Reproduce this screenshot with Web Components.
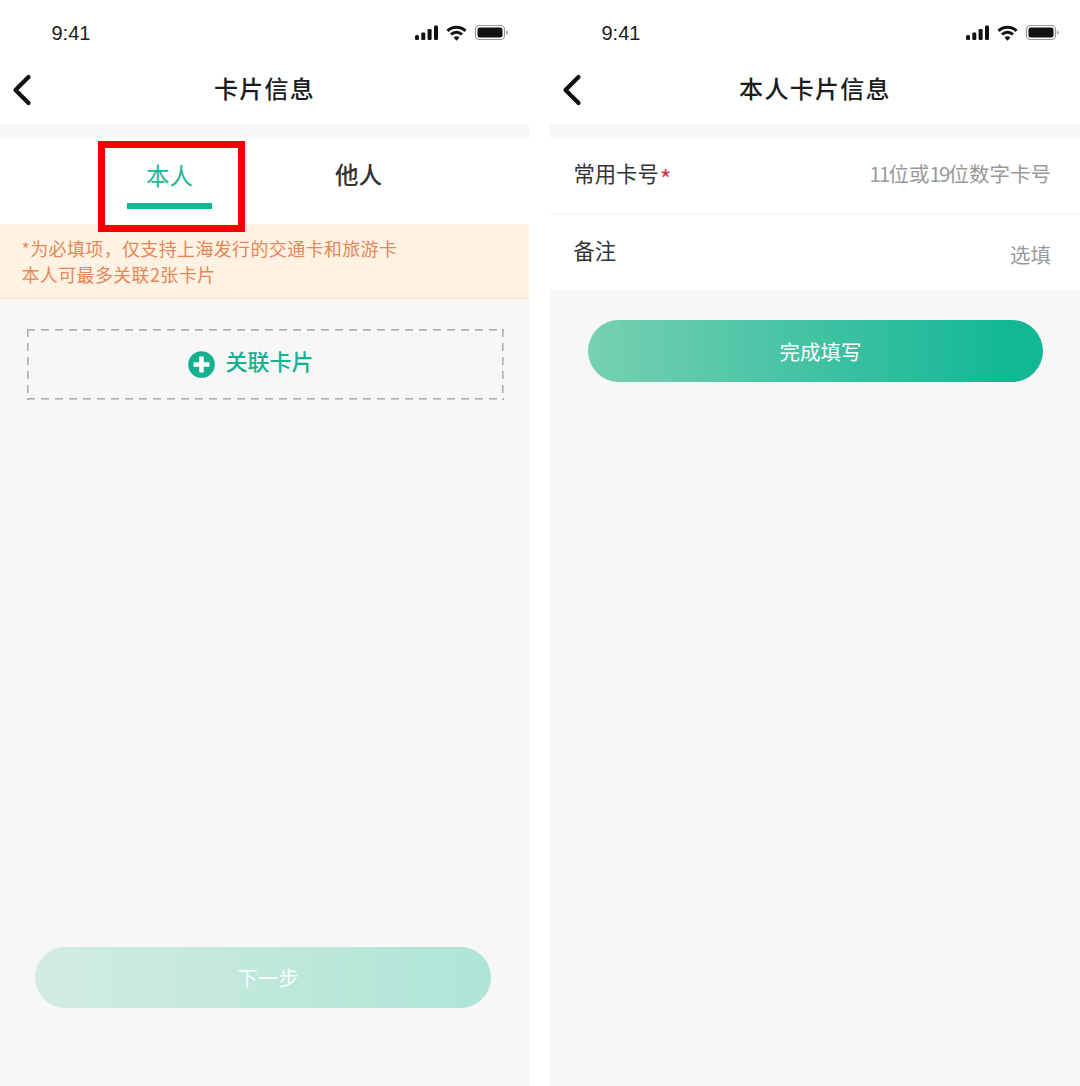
<!DOCTYPE html>
<html lang="zh">
<head>
<meta charset="utf-8">
<title>卡片信息</title>
<style>
  html, body { margin: 0; background: #fff; }
  body {
    width: 1080px;
    height: 1086px;
    overflow: hidden;
    display: flex;
    gap: 21px;
    font-family: "Noto Sans CJK SC", "Liberation Sans", sans-serif;
  }
</style>
</head>
<body>
  <phone-screen title="卡片信息" style="width:529px">
    <tab-switch>
      <tab-item active>本人</tab-item>
      <tab-item>他人</tab-item>
    </tab-switch>
    <notice-banner>*为必填项，仅支持上海发行的交通卡和旅游卡<br>本人可最多关联2张卡片</notice-banner>
    <add-card>关联卡片</add-card>
    <gradient-button disabled style="margin:auto 38px 78px 35px;height:61px;padding-bottom:2px">下一步</gradient-button>
  </phone-screen>

  <phone-screen title="本人卡片信息" style="width:530px">
    <form-row label="常用卡号" required value="11位或19位数字卡号"></form-row>
    <form-row label="备注" value="选填" last></form-row>
    <gradient-button style="margin:30px 37px 0 38px">完成填写</gradient-button>
  </phone-screen>

<script>
class StatusBar extends HTMLElement {
  constructor() {
    super();
    this.attachShadow({ mode: 'open' });
    this.shadowRoot.innerHTML = `
      <style>
        :host { display: flex; align-items: center; justify-content: space-between; height: 46px; padding: 10px 20px 0 51.500px; background: #fff; }
        .time { font: 20px/24px "Liberation Sans", Arial, sans-serif; color: #1a1a1a; }
        svg { display: block; }
      </style>
      <span class="time">9:41</span>
      <svg width="94" height="18" viewBox="0 0 94 18">
        <g fill="#111">
          <rect x="0" y="11" width="4" height="5" rx="1.5"/>
          <rect x="6.300" y="8.500" width="4" height="7.500" rx="1.200"/>
          <rect x="12.600" y="5" width="4" height="11" rx="1.200"/>
          <rect x="19" y="1.500" width="4" height="14.500" rx="1.200"/>
        </g>
        <g fill="none" stroke="#111" stroke-width="3">
          <path d="M32.500 6.800a13 13 0 0 1 18 0"/>
          <path d="M36 10.500a8 8 0 0 1 11 0"/>
        </g>
        <path d="M38.600 13.400a4.400 4.400 0 0 1 5.800 0L41.500 16.800z" fill="#111"/>
        <rect x="60.500" y="1.500" width="29" height="14" rx="4" fill="none" stroke="#999" stroke-width="1.200"/>
        <rect x="62.500" y="3.500" width="25" height="10" rx="2.200" fill="#111"/>
        <path d="M91 6.500c1.400.4 2 1.200 2 2s-.6 1.600-2 2z" fill="#aaa"/>
      </svg>`;
  }
}
customElements.define('status-bar', StatusBar);

class NavBar extends HTMLElement {
  constructor() {
    super();
    this.attachShadow({ mode: 'open' });
    this.shadowRoot.innerHTML = `
      <style>
        :host { display: grid; grid-template-columns: 1fr auto 1fr; align-items: center; height: 68px; background: #fff; }
        svg { display: block; margin: -1px 0 0 11px; }
        .title { font-size: 24px; line-height: 34px; letter-spacing: 1.300px; color: #1c1c1c; font-weight: 500; padding-bottom: 4px; }
      </style>
      <svg width="22" height="34" viewBox="0 0 22 34"><path d="M17.500 4 4.500 17 17.500 30" fill="none" stroke="#111" stroke-width="4.200" stroke-linecap="round" stroke-linejoin="round"/></svg>
      <div class="title"><slot></slot></div>
      <div></div>`;
  }
}
customElements.define('nav-bar', NavBar);

class PhoneScreen extends HTMLElement {
  constructor() {
    super();
    this.attachShadow({ mode: 'open' });
    this.shadowRoot.innerHTML = `
      <style>
        :host { display: flex; flex-direction: column; height: 1086px; background: #f7f7f7; flex: none; }
        .gap { height: 14px; flex: none; }
      </style>
      <status-bar></status-bar>
      <nav-bar></nav-bar>
      <div class="gap"></div>
      <slot></slot>`;
    this.shadowRoot.querySelector('nav-bar').textContent = this.getAttribute('title');
  }
}
customElements.define('phone-screen', PhoneScreen);

class TabSwitch extends HTMLElement {
  constructor() {
    super();
    this.attachShadow({ mode: 'open' });
    this.shadowRoot.innerHTML = `
      <style>
        :host { display: flex; justify-content: center; gap: 104px; height: 86px; padding-right: 1px; background: #fff; position: relative; }
        .mark { position: absolute; left: 98px; top: 3px; width: 147px; height: 91px; box-sizing: border-box; border: 7px solid #f60006; pointer-events: none; }
      </style>
      <slot></slot>
      <div class="mark"></div>`;
  }
}
customElements.define('tab-switch', TabSwitch);

class TabItem extends HTMLElement {
  constructor() {
    super();
    this.attachShadow({ mode: 'open' });
    this.shadowRoot.innerHTML = `
      <style>
        :host { display: block; width: 85px; height: 71px; padding-top: 18px; box-sizing: border-box; text-align: center; font-size: 23.500px; line-height: 36px; font-weight: 500; color: #333; }
        :host([active]) { color: #1fb596; font-weight: 400; padding-top: 19px; border-bottom: 6px solid #14b795; }
      </style>
      <slot></slot>`;
  }
}
customElements.define('tab-item', TabItem);

class NoticeBanner extends HTMLElement {
  constructor() {
    super();
    this.attachShadow({ mode: 'open' });
    this.shadowRoot.innerHTML = `
      <style>
        :host { display: block; height: 75px; box-sizing: border-box; padding: 12px 21.500px 0; background: #fff2e2; border-bottom: 2px solid #fbe9d4; font-size: 18px; letter-spacing: .35px; line-height: 25.500px; color: #e5875a; white-space: nowrap; }
      </style>
      <slot></slot>`;
  }
}
customElements.define('notice-banner', NoticeBanner);

class AddCard extends HTMLElement {
  constructor() {
    super();
    this.attachShadow({ mode: 'open' });
    this.shadowRoot.innerHTML = `
      <style>
        :host { display: block; padding: 30px 25px 0 27px; }
        .box {
          --dash: #adadad;
          display: flex; align-items: center; justify-content: center; gap: 10px;
          height: 71px; box-sizing: border-box; padding-right: 29px;
          background:
            repeating-linear-gradient(90deg, var(--dash) 0 8px, transparent 8px 14px) 0 0 / 100% 1.600px no-repeat,
            repeating-linear-gradient(90deg, var(--dash) 0 8px, transparent 8px 14px) 0 100% / 100% 1.600px no-repeat,
            repeating-linear-gradient(180deg, var(--dash) 0 8px, transparent 8px 14px) 0 0 / 1.600px 100% no-repeat,
            repeating-linear-gradient(180deg, var(--dash) 0 8px, transparent 8px 14px) 100% 0 / 1.600px 100% no-repeat;
          font-size: 22px; color: #17b091; font-weight: 500;
        }
        svg { display: block; }
        span { padding-bottom: 9px; line-height: 32px; }
      </style>
      <div class="box">
        <svg width="27" height="27" viewBox="0 0 27 27"><circle cx="13.500" cy="13.500" r="13.300" fill="#14b08f"/><path d="M13.500 5.500v16M5.500 13.500h16" stroke="#fff" stroke-width="4.500"/></svg>
        <span><slot></slot></span>
      </div>`;
  }
}
customElements.define('add-card', AddCard);

class GradientButton extends HTMLElement {
  constructor() {
    super();
    this.attachShadow({ mode: 'open' });
    this.shadowRoot.innerHTML = `
      <style>
        :host { display: flex; align-items: center; justify-content: center; height: 62px; flex: none; box-sizing: border-box; padding-left: 10px; border-radius: 31px; background: linear-gradient(90deg, #78d0b2, #12b795 92%); color: #fff; font-size: 20.500px; }
        :host([disabled]) { background: linear-gradient(90deg, #d2ebe3, #aee5d6); color: rgba(255,255,255,.9); }
      </style>
      <slot></slot>`;
  }
}
customElements.define('gradient-button', GradientButton);

class FormRow extends HTMLElement {
  constructor() {
    super();
    this.attachShadow({ mode: 'open' });
    const star = this.hasAttribute('required') ? '<i>*</i>' : '';
    // the digits in the placeholder are set much tighter than the hanzi
    const value = this.getAttribute('value').replace(/\d+/g, '<b>$&</b>');
    this.shadowRoot.innerHTML = `
      <style>
        :host { display: flex; justify-content: space-between; height: 76px; box-sizing: border-box; padding: 18px 29px 0 23.500px; background: #fff; border-bottom: 1px solid #f2f2f2; line-height: 34px; }
        :host([last]) { border-bottom: 0; padding-top: 19px; }
        .label { font-size: 21.300px; color: #333; }
        i { font-style: normal; color: #d9363e; font-size: 25px; line-height: 20px; margin-left: 1px; vertical-align: -7px; }
        .value { font-size: 20.500px; color: #999; }
        b { font-weight: 400; letter-spacing: -1.900px; }
        :host([last]) .value { padding-top: 4px; }
      </style>
      <span class="label">${this.getAttribute('label')}${star}</span>
      <span class="value">${value}</span>`;
  }
}
customElements.define('form-row', FormRow);
</script>
</body>
</html>
